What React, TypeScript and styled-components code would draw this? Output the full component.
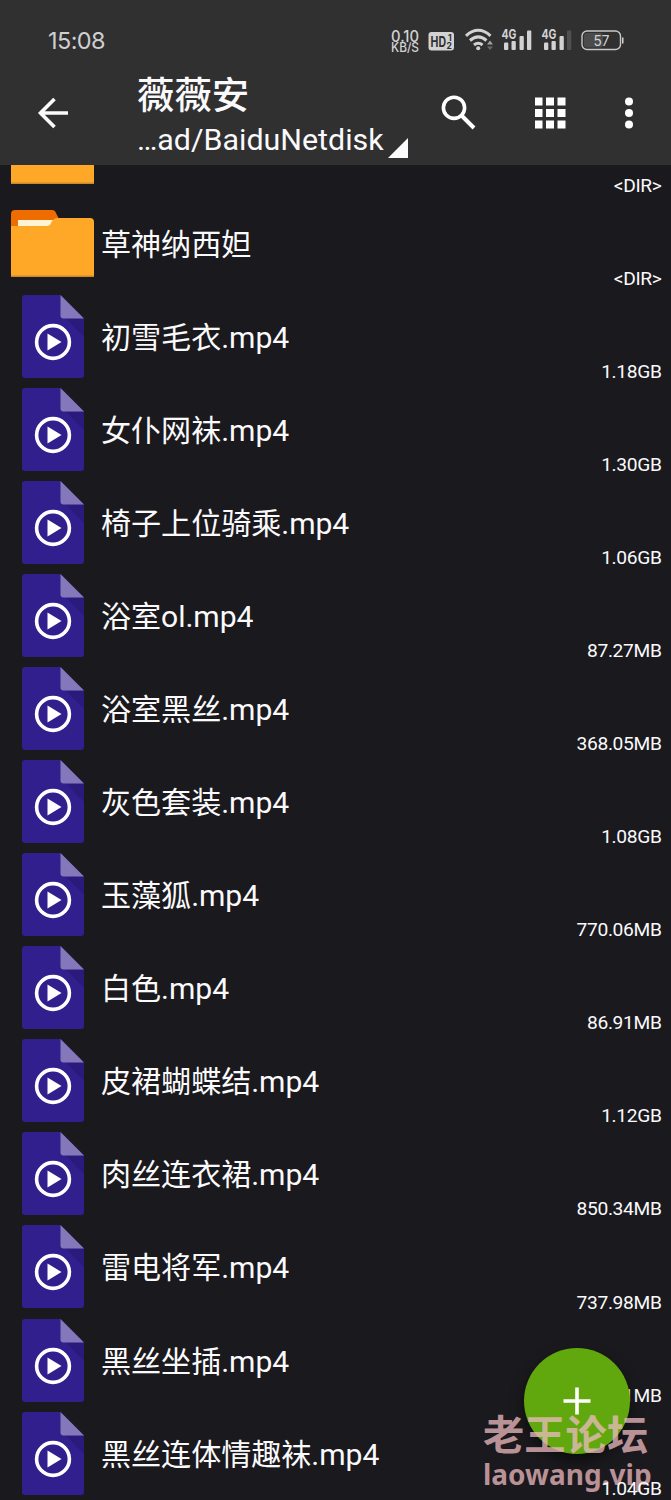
import React from "react";
import styled, { createGlobalStyle } from "styled-components";

const GlobalStyle = createGlobalStyle`
  * { box-sizing: border-box; }
  body { margin: 0; background: #1a191d; }
`;

const latin = `Roboto, "Noto Sans CJK SC", sans-serif`;

const Screen = styled.div`
  position: relative;
  display: flex;
  flex-direction: column;
  width: 671px;
  height: 1500px;
  overflow: hidden;
  background: #1a191d;
  color: #fafafc;
  font-family: ${latin};
`;

const Header = styled.header`
  flex: none;
  height: 165px;
  background: #303031;
`;

const StatusBar = styled.div`
  display: flex;
  align-items: center;
  justify-content: space-between;
  height: 60px;
  padding: 20px 47px 0 48px;
`;

const Clock = styled.span`
  padding-top: 2px;
  color: #cfcfcf;
  font-family: Inter, sans-serif;
  font-size: 23.5px;
  line-height: 40px;
  letter-spacing: -0.6px;
`;

const StatusIcons = styled.svg`
  display: block;
  width: 236px;
  height: 40px;
`;

const AppBar = styled.div`
  display: flex;
  height: 105px;
`;

const BackButton = styled.button`
  display: flex;
  align-items: center;
  width: 137px;
  height: 105px;
  padding: 0 0 0 33px;
  border: 0;
  background: none;
`;

const Titles = styled.div`
  width: 280px;
  padding-top: 11px;
`;

const Title = styled.h1`
  margin: 0;
  font-size: 37.4px;
  font-weight: 500;
  line-height: 50px;
`;

const PathLine = styled.div`
  display: flex;
  align-items: flex-end;
  gap: 4px;
  height: 38px;
  font-size: 30.4px;
  line-height: 38px;
  white-space: nowrap;
`;

const Corner = styled.svg`
  display: block;
  flex: none;
  width: 20px;
  height: 20px;
  margin-bottom: 1px;
`;

const Actions = styled.div`
  display: flex;
  flex: 1;
  align-items: center;
  padding-left: 24px;
`;

const ActionButton = styled.button<{ $gap: number }>`
  display: flex;
  margin: 0 ${(p) => p.$gap}px 0 0;
  padding: 0;
  border: 0;
  background: none;
`;

const Viewport = styled.main`
  flex: 1;
  min-height: 0;
  overflow: hidden;
`;

const FileList = styled.ul`
  margin: -61.5px 0 0;
  padding: 0;
  list-style: none;
`;

const Row = styled.li`
  display: flex;
  height: 93.08px;
  padding: 0 9.5px 0 11px;
`;

const IconCell = styled.div`
  display: flex;
  align-items: center;
  justify-content: center;
  width: 83px;
  margin-right: 7px;
`;

const Name = styled.span`
  flex: 1;
  padding-top: 2px;
  font-size: 30.1px;
  line-height: 92px;
  letter-spacing: -0.05px;
  white-space: nowrap;
`;

const Size = styled.span`
  position: relative;
  z-index: 2;
  align-self: flex-end;
  margin-bottom: -1px;
  font-size: 19.2px;
  line-height: 24px;
  letter-spacing: -0.35px;
`;

const Fab = styled.button`
  position: absolute;
  z-index: 3;
  left: 524px;
  top: 1348px;
  display: flex;
  align-items: center;
  justify-content: center;
  width: 106px;
  height: 106px;
  padding: 0;
  border: 0;
  border-radius: 50%;
  background: #60a80d;
  box-shadow: 0 7px 14px rgba(0, 0, 0, 0.5);
`;

const Watermark = styled.div<{ $top: number; $layer: number }>`
  position: absolute;
  z-index: ${(p) => p.$layer};
  left: 483px;
  top: ${(p) => p.$top}px;
  color: rgba(237, 187, 191, 0.76);
  font-weight: 700;
  white-space: nowrap;
`;

const WatermarkName = styled(Watermark)`
  font-family: "Noto Sans CJK SC", sans-serif;
  font-size: 41.3px;
  line-height: 50px;
`;

const WatermarkSite = styled(Watermark)`
  font-family: "Noto Sans", sans-serif;
  font-size: 28px;
  line-height: 30px;
`;

const FolderIcon = () => (
  <svg width="83" height="83" viewBox="0 0 83 83">
    <path d="M0 24V12q0-4 4-4h37q3 0 4 3l4 8v8H0z" fill="#ef6c00" />
    <path d="M7 18h36v8H7z" fill="#fff3d6" />
    <path d="M0 24h36q3 0 4-3l1-2q2-3 5-3h33q4 0 4 4v55H0z" fill="#ffa726" />
    <path d="M0 73.5h83V75H0z" fill="#c98a2c" />
  </svg>
);

const VideoIcon = () => (
  <svg width="62" height="83" viewBox="0 0 62 83">
    <path d="M3 0h35.500L62 23.500V80q0 3-3 3H3q-3 0-3-3V3q0-3 3-3z" fill="#311f8d" />
    <path d="M44 23.500h18V42z" fill="#291a7b" />
    <path d="M38.500 0L62 23.500H41.500q-3 0-3-3z" fill="#8478ba" />
    <circle cx="31" cy="47" r="16.400" fill="none" stroke="#fff" strokeWidth="3.600" />
    <path d="M25.500 38.500v17L39.500 47z" fill="#fff" />
  </svg>
);

type Entry = { name: string; size: string; folder?: boolean };

const entries: Entry[] = [
  { name: "", size: "<DIR>", folder: true },
  { name: "草神纳西妲", size: "<DIR>", folder: true },
  { name: "初雪毛衣.mp4", size: "1.18GB" },
  { name: "女仆网袜.mp4", size: "1.30GB" },
  { name: "椅子上位骑乘.mp4", size: "1.06GB" },
  { name: "浴室ol.mp4", size: "87.27MB" },
  { name: "浴室黑丝.mp4", size: "368.05MB" },
  { name: "灰色套装.mp4", size: "1.08GB" },
  { name: "玉藻狐.mp4", size: "770.06MB" },
  { name: "白色.mp4", size: "86.91MB" },
  { name: "皮裙蝴蝶结.mp4", size: "1.12GB" },
  { name: "肉丝连衣裙.mp4", size: "850.34MB" },
  { name: "雷电将军.mp4", size: "737.98MB" },
  { name: "黑丝坐插.mp4", size: "1MB" },
  { name: "黑丝连体情趣袜.mp4", size: "1.04GB" },
];

const StatusGlyphs = () => (
  <StatusIcons viewBox="388 20 236 40" fill="#d2d2d2" fontFamily="Inter, sans-serif">
    <text x="391" y="41.500" fontSize="16" fontWeight="500" textLength="28" lengthAdjust="spacingAndGlyphs">0.10</text>
    <text x="391" y="52" fontSize="12.500" fontWeight="500" textLength="28" lengthAdjust="spacingAndGlyphs">KB/S</text>
    <rect x="428.500" y="32" width="25.500" height="18.500" rx="3" />
    <g fill="#303031" fontWeight="700">
      <text x="430.500" y="46.500" fontSize="14.500" textLength="15.500" lengthAdjust="spacingAndGlyphs">HD</text>
      <text x="448" y="40.500" fontSize="8.500">1</text>
      <text x="446.500" y="49" fontSize="8.500">2</text>
    </g>
    <g fill="none" stroke="#d2d2d2" strokeWidth="3">
      <path d="M466 35.800q12.200-11 24.500 0" />
      <path d="M470 40.500q8.200-7.200 16.500 0" />
      <path d="M474 45q4.200-3.500 8.500 0" />
    </g>
    <circle cx="478.200" cy="48.300" r="2" />
    <path d="M487 44.500l3-4 3 4z" fill="#a0a0a0" />
    <path d="M487 46.500l3 3.500 3-3.500z" fill="#6a6a6a" />
    <text x="501.500" y="39" fontSize="13" fontWeight="700" textLength="15" lengthAdjust="spacingAndGlyphs">4G</text>
    <rect x="504" y="42.500" width="4.300" height="7.500" rx="1" />
    <rect x="511.500" y="41" width="4.300" height="9" rx="1" />
    <rect x="519.500" y="36" width="4.300" height="14" rx="1" />
    <rect x="527" y="30.500" width="4.300" height="19.500" rx="1" />
    <text x="541.500" y="39" fontSize="13" fontWeight="700" textLength="15" lengthAdjust="spacingAndGlyphs">4G</text>
    <rect x="544" y="42.500" width="4.300" height="7.500" rx="1" />
    <rect x="551.500" y="41" width="4.300" height="9" rx="1" />
    <rect x="559.500" y="36" width="4.300" height="14" rx="1" />
    <rect x="567" y="30.500" width="4.300" height="19.500" rx="1" fill="#505051" />
    <rect x="584" y="33" width="19" height="14.500" rx="3" fill="#4b4b4c" />
    <rect x="582" y="31" width="38.500" height="18.500" rx="5" fill="none" stroke="#c8c8c8" strokeWidth="1.400" />
    <path d="M622 37.500h1.500v6H622z" />
    <text x="593.500" y="46" fontSize="14.500" textLength="16" lengthAdjust="spacingAndGlyphs">57</text>
  </StatusIcons>
);

export default function App() {
  return (
    <Screen>
      <GlobalStyle />
      <Header>
        <StatusBar>
          <Clock>15:08</Clock>
          <StatusGlyphs />
        </StatusBar>
        <AppBar>
          <BackButton aria-label="Back">
            <svg width="40" height="40" viewBox="0 0 40 40" fill="none" stroke="#fafafc" strokeWidth="3.600">
              <path d="M35 20H7M21.500 6L7.500 20l14 14" />
            </svg>
          </BackButton>
          <Titles>
            <Title>薇薇安</Title>
            <PathLine>
              <span>…ad/BaiduNetdisk</span>
              <Corner viewBox="0 0 20 20"><path d="M20 0v20H0z" fill="#fafafc" /></Corner>
            </PathLine>
          </Titles>
          <Actions>
            <ActionButton $gap={58} aria-label="Search">
              <svg width="36" height="36" viewBox="0 0 36 36" fill="none" stroke="#fff">
                <circle cx="13" cy="12.800" r="10.600" strokeWidth="3.600" />
                <path d="M20.500 20.500L33 33" strokeWidth="4" />
              </svg>
            </ActionButton>
            <ActionButton $gap={59} aria-label="Grid view">
              <svg width="31" height="32" viewBox="0 0 31 32" fill="#fff">
                {[0, 11.5, 23].map((y) =>
                  [0, 11.5, 23].map((x) => <rect key={`${x}-${y}`} x={x - 0.5} y={y + 0.5} width="8" height="8" />)
                )}
              </svg>
            </ActionButton>
            <ActionButton $gap={0} aria-label="More">
              <svg width="8" height="32" viewBox="0 0 8 32" fill="#fff">
                <circle cx="4" cy="4.500" r="4" />
                <circle cx="4" cy="16" r="4" />
                <circle cx="4" cy="27.500" r="4" />
              </svg>
            </ActionButton>
          </Actions>
        </AppBar>
      </Header>
      <Viewport>
        <FileList>
          {entries.map((entry, i) => (
            <Row key={i}>
              <IconCell>{entry.folder ? <FolderIcon /> : <VideoIcon />}</IconCell>
              <Name>{entry.name}</Name>
              <Size>{entry.size}</Size>
            </Row>
          ))}
        </FileList>
      </Viewport>
      <Fab aria-label="Add">
        <svg width="28" height="28" viewBox="0 0 28 28" stroke="#fff" strokeWidth="3.600">
          <path d="M14 .5v27M.5 14h27" />
        </svg>
      </Fab>
      <WatermarkName $top={1407} $layer={4}>老王论坛</WatermarkName>
      <WatermarkSite $top={1459} $layer={1}>laowang.vip</WatermarkSite>
    </Screen>
  );
}
